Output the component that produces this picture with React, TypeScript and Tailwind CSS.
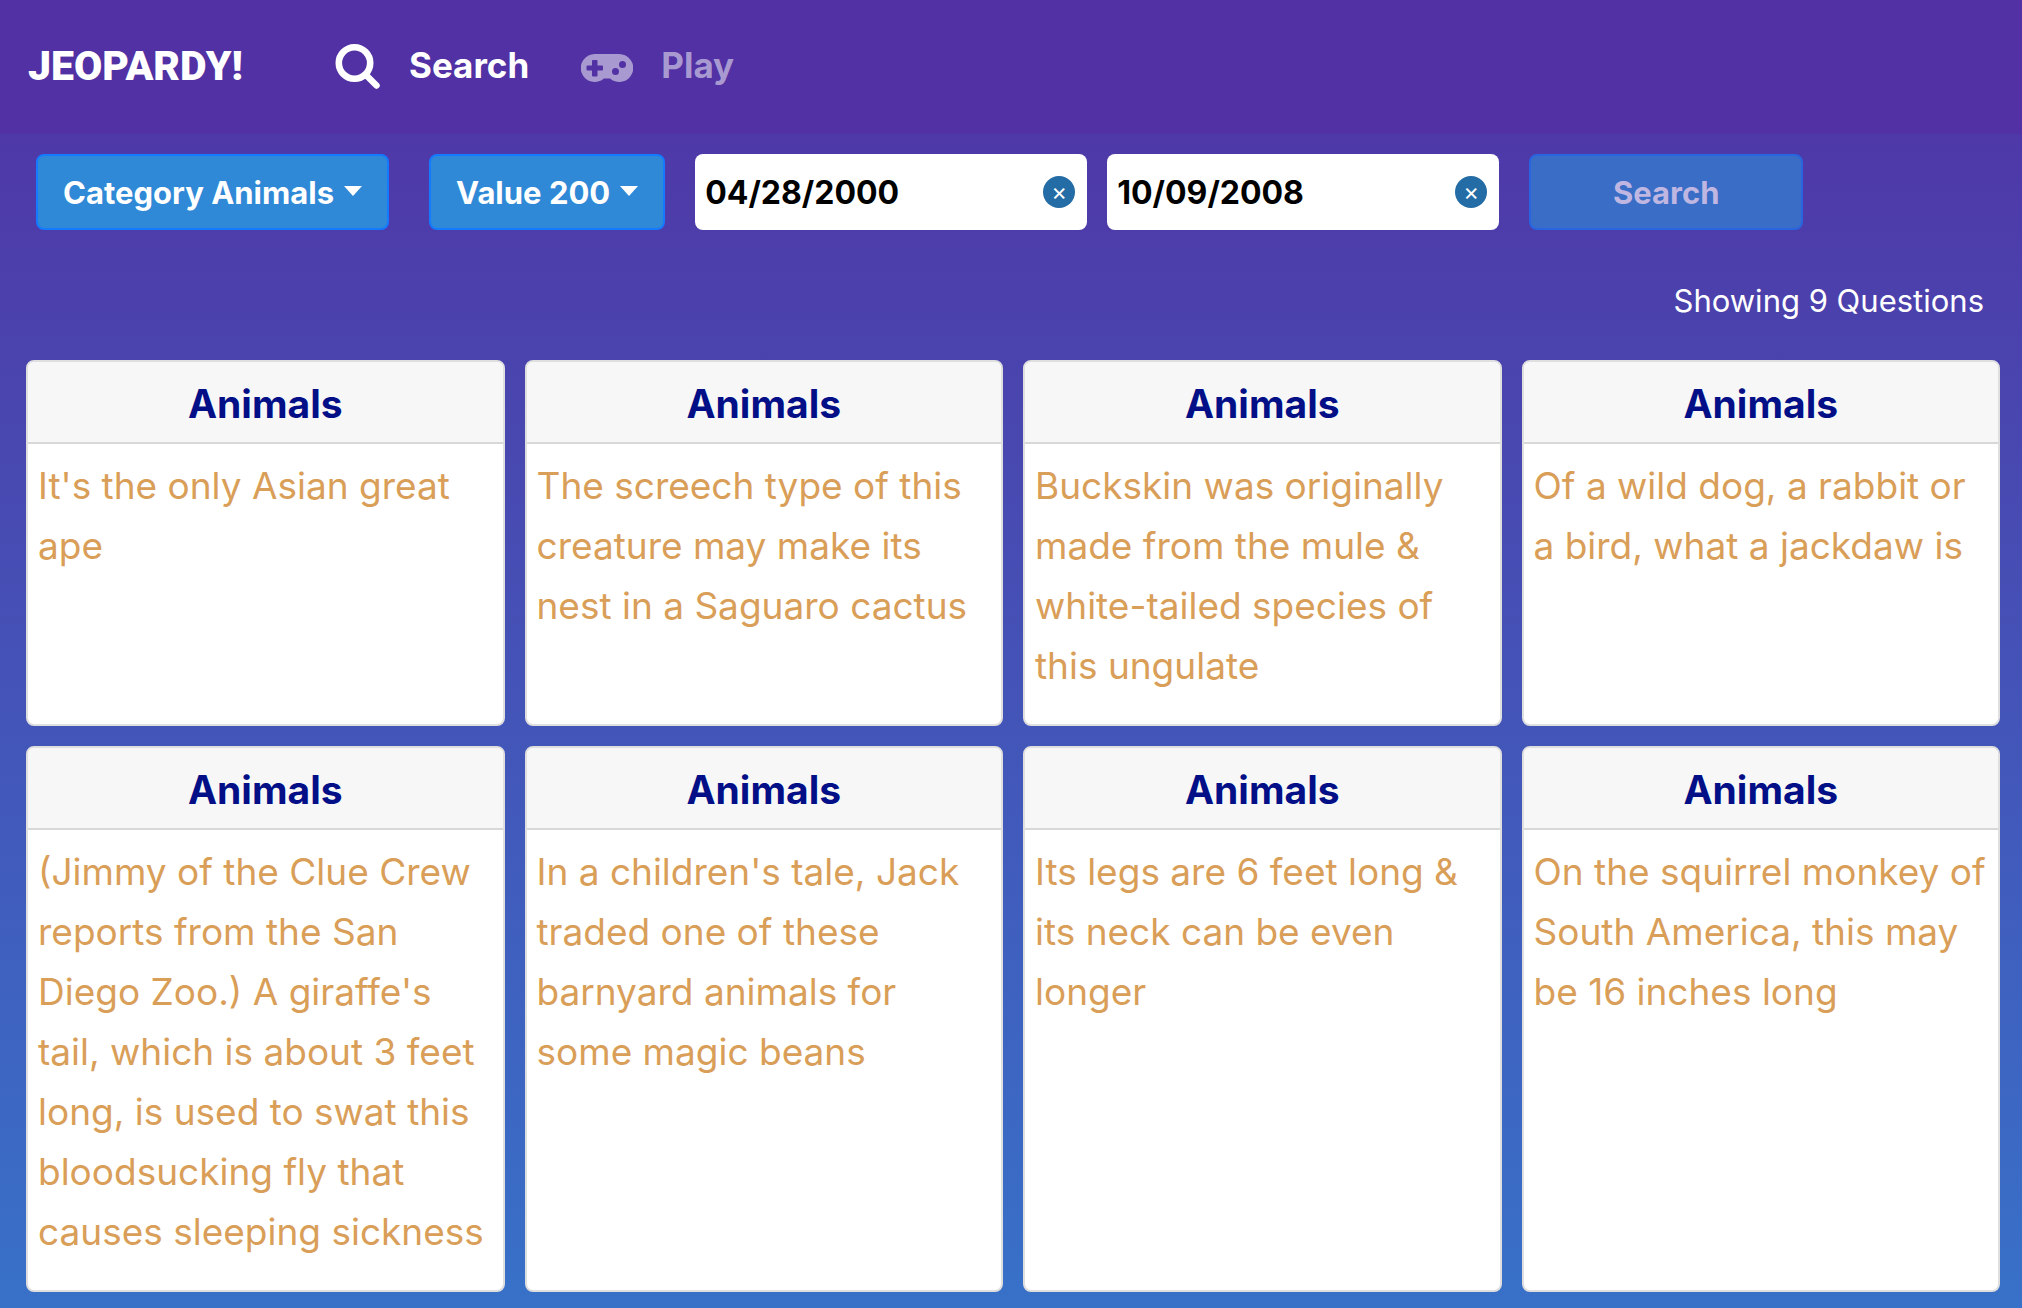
import React from "react";

const cards = [
  "It's the only Asian great ape",
  "The screech type of this creature may make its nest in a Saguaro cactus",
  "Buckskin was originally made from the mule & white-tailed species of this ungulate",
  "Of a wild dog, a rabbit or a bird, what a jackdaw is",
  "(Jimmy of the Clue Crew reports from the San Diego Zoo.) A giraffe's tail, which is about 3 feet long, is used to swat this bloodsucking fly that causes sleeping sickness",
  "In a children's tale, Jack traded one of these barnyard animals for some magic beans",
  "Its legs are 6 feet long & its neck can be even longer",
  "On the squirrel monkey of South America, this may be 16 inches long",
];

function SearchIcon() {
  return (
    <svg className="size-[46px]" viewBox="0 0 46 46" fill="none" stroke="currentColor" aria-hidden="true">
      <circle cx="19.5" cy="19" r="15.7" strokeWidth="6.6" />
      <path d="M31 31 41.500 41.500" strokeWidth="6.4" strokeLinecap="round" />
    </svg>
  );
}

function GamepadIcon() {
  return (
    <svg className="h-[30px] w-[52px]" viewBox="0 0 52 30" fill="currentColor" aria-hidden="true">
      <path
        fillRule="evenodd"
        transform="translate(0 2)"
        d="M14 0H38A14 14 0 1 1 29 24.500H23A14 14 0 1 1 14 0ZM12 6Q11 6 11 7V11.500H6.500Q5.500 11.500 5.500 12.500V15.500Q5.500 16.500 6.500 16.500H11V21.500Q11 22.500 12 22.500H15.500Q16.500 22.500 16.500 21.500V16.500H21Q22 16.500 22 15.500V12.500Q22 11.500 21 11.500H16.500V7Q16.500 6 15.500 6ZM34.500 14A3.500 3.500 0 1 0 34.500 21A3.500 3.500 0 1 0 34.500 14ZM41.500 7A3.500 3.500 0 1 0 41.500 14A3.500 3.500 0 1 0 41.500 7Z"
      />
    </svg>
  );
}

function Caret() {
  return (
    <svg className="mb-1 h-[10px] w-[18px]" viewBox="0 0 18 10" fill="currentColor" aria-hidden="true">
      <path d="M0 0H18L9 10Z" />
    </svg>
  );
}

function DropButton({ label }: { label: string }) {
  return (
    <button
      type="button"
      aria-haspopup="menu"
      className="flex h-[76px] items-center gap-[10px] rounded-lg border-2 border-[#147bff] bg-[#2f89d6] px-[25px] pt-0.5 text-[31px] font-bold whitespace-nowrap text-white"
    >
      {label}
      <Caret />
    </button>
  );
}

function DateField({ label, value }: { label: string; value: string }) {
  const [date, setDate] = React.useState(value);
  return (
    <div className="flex h-[76px] w-[392px] items-center rounded-lg bg-white pr-3 pl-[10px]">
      <input
        type="text"
        aria-label={label}
        value={date}
        onChange={(e) => setDate(e.target.value)}
        className="min-w-0 flex-1 bg-transparent pt-0.5 text-[32px] font-bold text-black outline-none"
      />
      <button
        type="button"
        aria-label={"Clear " + label}
        onClick={() => setDate("")}
        className="flex size-8 items-center justify-center rounded-full bg-[#246ca5] text-2xl leading-none text-white"
      >
        ×
      </button>
    </div>
  );
}

export default function App() {
  return (
    <div className="min-h-screen bg-linear-to-b/srgb from-[#5132a4] to-[#3871c8] pb-4 font-['Inter',sans-serif]">
      <header className="flex h-[134px] items-center bg-[#5131a3] px-7 text-white">
        <a href="#home" className="w-[212px] font-['Roboto',sans-serif] text-[41px] font-black">
          JEOPARDY!
        </a>
        <nav className="ml-[95px] flex items-center gap-[52px] text-[35px] font-bold">
          <a href="#search" className="flex items-center gap-7">
            <SearchIcon />
            <span className="pb-1">Search</span>
          </a>
          <a href="#play" className="flex items-center gap-7 text-[#a999d1]">
            <GamepadIcon />
            <span className="pb-1">Play</span>
          </a>
        </nav>
      </header>
      <form className="flex flex-wrap items-center px-9 pt-5" onSubmit={(e) => e.preventDefault()}>
        <div className="flex gap-10">
          <DropButton label="Category Animals" />
          <DropButton label="Value 200" />
        </div>
        <div className="mx-[30px] flex gap-5">
          <DateField label="Start date" value="04/28/2000" />
          <DateField label="End date" value="10/09/2008" />
        </div>
        <button
          type="submit"
          disabled
          className="h-[76px] w-[274px] rounded-lg border-2 border-[#2865df] bg-[#3a6dc6] pt-0.5 text-[31px] font-bold text-[#bfb6e1]"
        >
          Search
        </button>
      </form>
      <p className="mt-12 pr-[38px] text-right text-[31px] leading-[46px] text-white">Showing 9 Questions</p>
      <main className="mt-9 grid grid-cols-4 gap-5 pr-[22px] pl-[26px]">
        {cards.map((text) => (
          <article key={text} className="flex flex-col overflow-hidden rounded-lg border-2 border-[#dfdfdf] bg-white">
            <h2 className="border-b-2 border-[#d8d8d8] bg-[#f7f7f7] pt-3 pb-2 text-center text-[39px] leading-[60px] font-bold text-[#020f87]">
              Animals
            </h2>
            <p className="px-[10px] pt-3 pb-7 text-[37px] leading-[60px] text-[#d99e58]">{text}</p>
          </article>
        ))}
      </main>
    </div>
  );
}
